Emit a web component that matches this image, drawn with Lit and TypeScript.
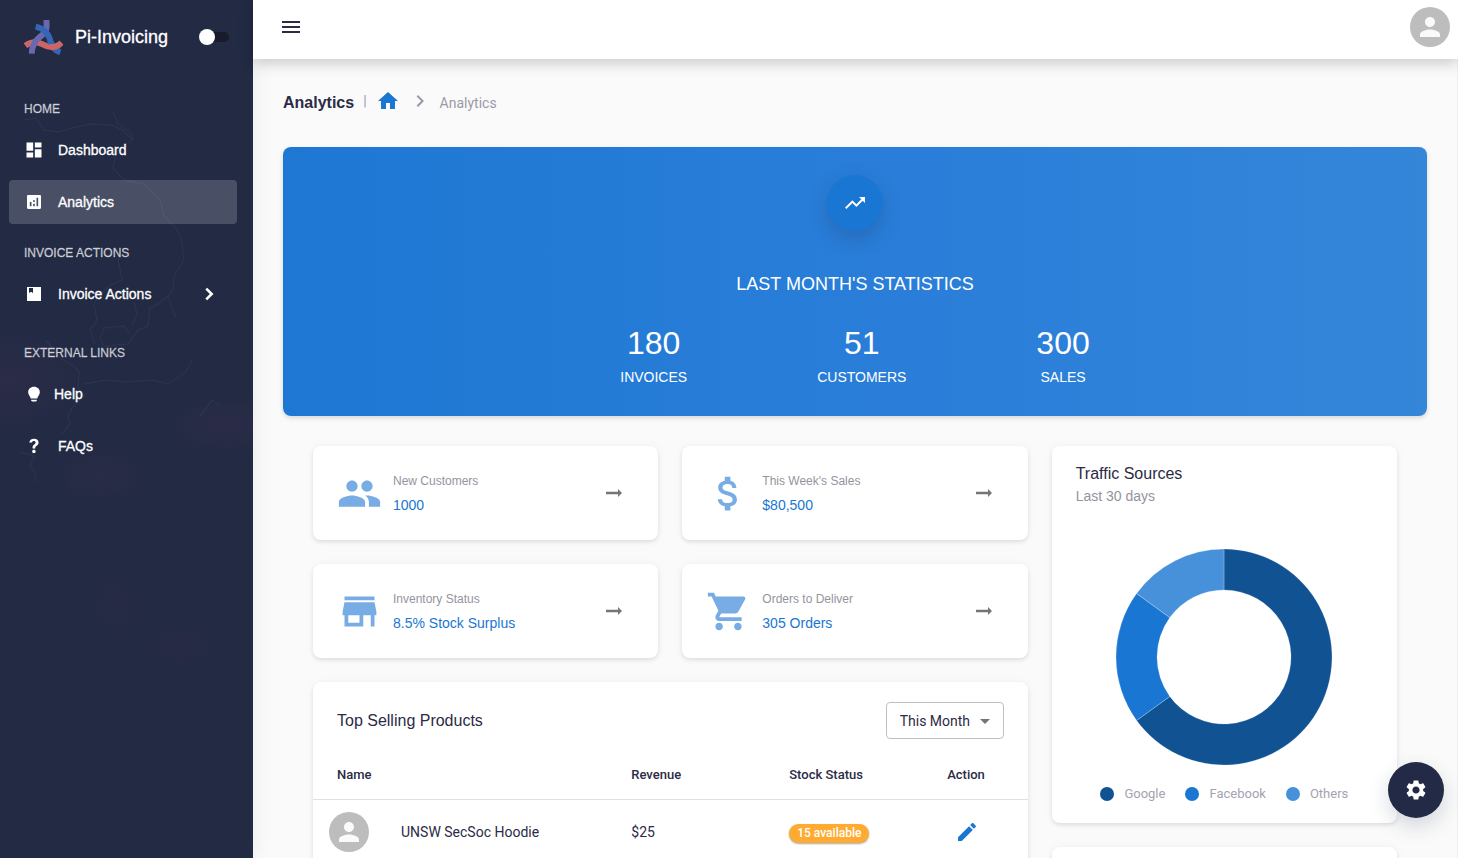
import { LitElement, html, css, svg } from "lit";
import { customElement, property, state } from "lit/decorators.js";
import { classMap } from "lit/directives/class-map.js";

const ICONS: Record<string, string> = {
  people:
    "M16 11c1.66 0 2.99-1.34 2.99-3S17.66 5 16 5c-1.66 0-3 1.34-3 3s1.34 3 3 3zm-8 0c1.66 0 2.99-1.34 2.99-3S9.66 5 8 5C6.34 5 5 6.34 5 8s1.34 3 3 3zm0 2c-2.33 0-7 1.17-7 3.5V19h14v-2.5c0-2.33-4.67-3.5-7-3.5zm8 0c-.29 0-.62.02-.97.05 1.16.84 1.97 1.97 1.97 3.45V19h6v-2.5c0-2.33-4.67-3.5-7-3.5z",
  money:
    "M11.8 10.9c-2.27-.59-3-1.2-3-2.15 0-1.09 1.01-1.85 2.7-1.85 1.78 0 2.44.85 2.5 2.1h2.21c-.07-1.72-1.12-3.3-3.21-3.81V3h-3v2.16c-1.94.42-3.5 1.68-3.5 3.61 0 2.31 1.91 3.46 4.7 4.13 2.5.6 3 1.48 3 2.41 0 .69-.49 1.79-2.7 1.79-2.06 0-2.87-.92-2.98-2.1h-2.2c.12 2.19 1.76 3.42 3.68 3.83V21h3v-2.15c1.95-.37 3.5-1.5 3.5-3.55 0-2.84-2.43-3.81-4.7-4.4z",
  store: "M20 4H4v2h16V4zm1 10v-2l-1-5H4l-1 5v2h1v6h10v-6h4v6h2v-6h1zm-9 4H6v-4h6v4z",
  cart:
    "M7 18c-1.1 0-1.99.9-1.99 2S5.9 22 7 22s2-.9 2-2-.9-2-2-2zM1 2v2h2l3.6 7.59-1.35 2.45c-.16.28-.25.61-.25.96 0 1.1.9 2 2 2h12v-2H7.42c-.14 0-.25-.11-.25-.25l.03-.12.9-1.63h7.45c.75 0 1.41-.41 1.75-1.03l3.58-6.49c.08-.14.12-.31.12-.48 0-.55-.45-1-1-1H5.21l-.94-2H1zm16 16c-1.1 0-1.99.9-1.99 2s.89 2 1.99 2 2-.9 2-2-.9-2-2-2z",
  person:
    "M12 12c2.21 0 4-1.79 4-4s-1.79-4-4-4-4 1.79-4 4 1.79 4 4 4zm0 2c-2.67 0-8 1.34-8 4v2h16v-2c0-2.66-5.33-4-8-4z",
  arrow: "M16.01 10.800H4v2.400h12.01V16L20 12l-3.990-4z",
  home: "M10 20v-6h4v6h5v-8h3L12 3 2 12h3v8z",
  chevron: "M10 6 8.59 7.41 13.17 12l-4.58 4.59L10 18l6-6z",
  chevronBold: "M8.6 4.4 6.4 6.6 11.8 12l-5.4 5.4 2.2 2.2 7.6-7.6z",
  menu: "M3 18h18v-2H3v2zm0-5h18v-2H3v2zm0-7v2h18V6H3z",
  dashboard: "M3 13h8V3H3v10zm0 8h8v-6H3v6zm10 0h8V11h-8v10zm0-18v6h8V3h-8z",
  analytics:
    "M19 3.600H5c-.8 0-1.400.600-1.400 1.400v14c0 .8.600 1.400 1.400 1.400h14c.8 0 1.400-.600 1.400-1.400V5c0-.8-.600-1.400-1.400-1.400zM9 17H7v-5h2v5zm4 0h-2v-3h2v3zm0-5h-2v-2h2v2zm4 5h-2V7h2v10z",
  book: "M3.600 3.600h16.800v16.800H3.600zM6 4.800v6l2.400-1.600 2.400 1.600v-6z",
  bulb:
    "M12 3.400c-4 0-7 2.700-7 6.500 0 3.200 2.500 5 3.200 7.600h7.600c.7-2.600 3.200-4.400 3.200-7.600 0-3.800-3-6.500-7-6.500zM8.600 19h6.800v1l-1.200.9H9.800L8.600 20z",
  question:
    "M12 3.400c-3.300 0-5.300 1.600-5.700 4.500h3.300c.2-1.200 1-1.800 2.200-1.800 1.300 0 2.100.7 2.100 1.800 0 .9-.4 1.400-1.700 2.300-1.500 1-2 2.100-1.900 4.100v.7h3.200v-.5c0-1.300.4-1.800 1.800-2.800 1.500-1 2.200-2.200 2.200-3.900 0-2.700-2.200-4.400-5.500-4.400zM11.900 16.600c-1.200 0-2.100.8-2.100 2s.9 2 2.100 2 2.100-.8 2.100-2-.9-2-2.100-2z",
  trending: "M16 6l2.290 2.290-4.880 4.880-4-4L2 16.590 3.410 18l6-6 4 4 6.300-6.290L22 12V6z",
  edit:
    "M3 17.250V21h3.750L17.810 9.940l-3.750-3.750L3 17.250zM20.710 7.040c.39-.39.39-1.020 0-1.410l-2.340-2.340c-.39-.39-1.020-.39-1.410 0l-1.830 1.830 3.750 3.750 1.830-1.830z",
  caret: "M7 10l5 5 5-5z",
  settings:
    "M19.14 12.94c.04-.3.06-.61.06-.94 0-.32-.02-.64-.07-.94l2.03-1.58c.18-.14.23-.41.12-.61l-1.92-3.32c-.12-.22-.37-.29-.59-.22l-2.39.96c-.5-.38-1.03-.7-1.62-.94l-.36-2.54c-.04-.24-.24-.41-.48-.41h-3.84c-.24 0-.43.17-.47.41l-.36 2.54c-.59.24-1.13.57-1.62.94l-2.39-.96c-.22-.08-.47 0-.59.22L2.74 8.87c-.12.21-.08.47.12.61l2.03 1.58c-.05.3-.09.63-.09.94s.02.64.07.94l-2.03 1.58c-.18.14-.23.41-.12.61l1.92 3.32c.12.22.37.29.59.22l2.39-.96c.5.38 1.03.7 1.62.94l.36 2.54c.05.24.24.41.48.41h3.84c.24 0 .44-.17.47-.41l.36-2.54c.59-.24 1.13-.56 1.62-.94l2.39.96c.22.08.47 0 .59-.22l1.92-3.32c.12-.22.07-.47-.12-.61l-2.01-1.58zM12 15.6c-1.98 0-3.6-1.62-3.6-3.6s1.62-3.6 3.6-3.6 3.6 1.62 3.6 3.6-1.62 3.6-3.6 3.6z",
};

@customElement("ui-icon")
export class UiIcon extends LitElement {
  @property() name = "";

  static styles = css`
    :host {
      display: block;
      flex: none;
      width: 24px;
      height: 24px;
    }
    .glyph {
      display: block;
      width: 100%;
      height: 100%;
      fill: currentColor;
      fill-rule: evenodd;
    }
  `;

  render() {
    return html`<svg class="glyph" viewBox="0 0 24 24" aria-hidden="true">
      <path d=${ICONS[this.name] ?? ""}></path>
    </svg>`;
  }
}

@customElement("ui-avatar")
export class UiAvatar extends LitElement {
  static styles = css`
    :host {
      display: flex;
      align-items: center;
      justify-content: center;
      width: 40px;
      height: 40px;
      border-radius: 50%;
      background: #bdbdbd;
      color: #fafafa;
    }
    .face {
      width: 30px;
      height: 30px;
    }
  `;

  render() {
    return html`<ui-icon class="face" name="person"></ui-icon>`;
  }
}

interface Slice {
  label: string;
  share: number;
  color: string;
}

@customElement("donut-chart")
export class DonutChart extends LitElement {
  @property({ attribute: false }) slices: Slice[] = [];

  static styles = css`
    :host {
      display: block;
    }
    .chart {
      display: block;
      width: 216px;
      height: 216px;
      margin: 0 auto;
    }
    .slice {
      stroke: rgba(255, 255, 255, 0.45);
      stroke-width: 0.5;
    }
    .legend {
      display: flex;
      justify-content: center;
      gap: 20px;
      margin: 20px 0 0;
      padding: 0;
      list-style: none;
    }
    .entry {
      display: flex;
      align-items: center;
      gap: 10px;
      font: 400 13px/18px Roboto, sans-serif;
      color: #a3a3b1;
    }
    .dot {
      width: 14px;
      height: 14px;
      border-radius: 50%;
    }
  `;

  private arc(from: number, to: number) {
    const at = (f: number, r: number) => {
      const a = f * 2 * Math.PI;
      return `${108 + r * Math.sin(a)} ${108 - r * Math.cos(a)}`;
    };
    const big = to - from > 0.5 ? 1 : 0;
    return `M${at(from, 108)}A108 108 0 ${big} 1 ${at(to, 108)}L${at(to, 67)}A67 67 0 ${big} 0 ${at(from, 67)}Z`;
  }

  render() {
    let start = 0;
    return html`
      <svg class="chart" viewBox="0 0 216 216" role="img" aria-label="Traffic sources">
        ${this.slices.map((s) => {
          const d = this.arc(start, start + s.share);
          start += s.share;
          return svg`<path class="slice" d=${d} fill=${s.color}></path>`;
        })}
      </svg>
      <ul class="legend">
        ${this.slices.map(
          (s) => html`<li class="entry">
            <span class="dot" style="background:${s.color}"></span>${s.label}
          </li>`
        )}
      </ul>
    `;
  }
}

@customElement("side-bar")
export class SideBar extends LitElement {
  @state() private dark = false;

  static styles = css`
    :host {
      display: block;
      position: relative;
      z-index: 1;
      overflow: hidden;
      box-sizing: border-box;
      color: #fff;
      font-family: "Liberation Sans", Arial, sans-serif;
      background:
        radial-gradient(90px 60px at 10px 380px, rgba(58, 46, 78, 0.35), transparent),
        radial-gradient(70px 34px at 225px 425px, rgba(58, 46, 78, 0.35), transparent),
        radial-gradient(60px 34px at 100px 475px, rgba(58, 46, 78, 0.3), transparent),
        radial-gradient(34px 40px at 115px 605px, rgba(52, 42, 72, 0.3), transparent),
        radial-gradient(44px 26px at 182px 646px, rgba(52, 42, 72, 0.35), transparent),
        #222a44;
    }
    .map {
      position: absolute;
      top: 0;
      left: 0;
      width: 253px;
      height: 500px;
      fill: none;
      stroke: #41597a;
      stroke-opacity: 0.2;
      stroke-width: 1.4;
      stroke-linejoin: round;
      pointer-events: none;
    }
    .panel {
      position: relative;
    }
    .brand {
      display: flex;
      align-items: center;
      height: 74px;
      padding: 0 24px;
      font-size: 18px;
      line-height: 24px;
    }
    .logo {
      width: 39px;
      height: 35px;
      margin-right: 12px;
      fill: none;
      stroke-width: 18;
    }
    .name {
      flex: 1;
      margin: 0;
      font: inherit;
      -webkit-text-stroke: 0.3px #fff;
    }
    .switch {
      appearance: none;
      display: flex;
      align-items: center;
      width: 30px;
      height: 10px;
      margin: 0;
      cursor: pointer;
      background: #171b2b;
      border-radius: 5px;
    }
    .switch::before {
      content: "";
      flex: none;
      width: 16px;
      height: 16px;
      border-radius: 50%;
      background: #fff;
    }
    .switch:checked::before {
      margin-left: auto;
    }
    .nav {
      padding: 14px 16px 0 9px;
    }
    .group {
      margin: 0;
      padding: 0;
      list-style: none;
    }
    .spaced {
      padding-bottom: 8px;
    }
    .caption {
      margin: 0;
      padding: 2px 0 0 15px;
      font-size: 12px;
      font-weight: 400;
      line-height: 38px;
      color: rgba(255, 255, 255, 0.7);
      -webkit-text-stroke: 0.3px rgba(255, 255, 255, 0.6);
    }
    .item {
      display: flex;
      align-items: center;
      gap: 14px;
      height: 44px;
      margin-bottom: 8px;
      padding: 0 17px 0 15px;
      border-radius: 4px;
      color: #fff;
      font-size: 14px;
      line-height: 20px;
      text-decoration: none;
      -webkit-text-stroke: 0.3px #fff;
    }
    .tight {
      gap: 10px;
    }
    .active {
      background: rgba(255, 255, 255, 0.18);
    }
    .icon {
      width: 20px;
      height: 20px;
    }
    .label {
      flex: 1;
    }
  `;

  private item(icon: string, label: string, opts: { active?: boolean; tight?: boolean; more?: boolean } = {}) {
    return html`<li>
      <a
        class=${classMap({ item: true, active: !!opts.active, tight: !!opts.tight })}
        href="#"
        aria-current=${opts.active ? "page" : "false"}
      >
        <ui-icon class="icon" name=${icon}></ui-icon>
        <span class="label">${label}</span>
        ${opts.more ? html`<ui-icon class="icon" name="chevronBold"></ui-icon>` : ""}
      </a>
    </li>`;
  }

  render() {
    return html`
      <svg class="map" viewBox="0 0 253 500" aria-hidden="true">
        <path
          d="M24 120 36 118 44 130 58 132 72 128 90 124 112 125 124 131 132 140 124 146 116 152 113 168 124 180 144 184 160 200 164 216 176 228 181 238 184 260 174 276 173 290 168 296 158 304 150 308 148 326 138 330 128 344 104 346 100 338 104 328 124 326 130 334"
        ></path>
        <path d="M113 112 118 124 130 132 133 140M118 258 122 280 112 284 100 294 94 304 97 320 90 330 95 344M134 302 137 314 132 326 M168 296 176 318"></path>
        <path
          d="M46 340 60 358 74 366 79 372 78 388 84 396 72 408 68 416 70 424 62 434 M84 384 106 380 124 382 152 380 168 384 186 372 192 360 M20 452 34 456 30 466 36 474 34 482 M200 416 212 400 220 406"
        ></path>
      </svg>
      <div class="panel">
        <header class="brand">
          <svg class="logo" viewBox="0 0 117 105" aria-hidden="true">
            <path stroke="#3565b5" d="M81 66C84 80 94 92 109 97"></path>
            <path stroke="#cc6666" d="M4 77C22 64 38 64 56 73C76 84 96 86 113 68"></path>
            <path stroke="#6a69b0" d="M67 0C70 32 66 36 46 52C30 65 24 78 23 101"></path>
            <path stroke="#3565b5" d="M35 20C62 26 77 44 81 72"></path>
          </svg>
          <h1 class="name">Pi-Invoicing</h1>
          <input
            class="switch"
            type="checkbox"
            aria-label="Dark mode"
            .checked=${this.dark}
            @change=${() => (this.dark = !this.dark)}
          />
        </header>
        <nav class="nav" aria-label="Main">
          <h2 class="caption">HOME</h2>
          <ul class="group">
            ${this.item("dashboard", "Dashboard")} ${this.item("analytics", "Analytics", { active: true })}
          </ul>
          <h2 class="caption">INVOICE ACTIONS</h2>
          <ul class="group spaced">
            ${this.item("book", "Invoice Actions", { more: true })}
          </ul>
          <h2 class="caption">EXTERNAL LINKS</h2>
          <ul class="group">
            ${this.item("bulb", "Help", { tight: true })} ${this.item("question", "FAQs")}
          </ul>
        </nav>
      </div>
    `;
  }
}

@customElement("app-root")
export class AppRoot extends LitElement {
  private stats = [
    { value: "180", label: "INVOICES" },
    { value: "51", label: "CUSTOMERS" },
    { value: "300", label: "SALES" },
  ];

  private tiles = [
    { icon: "people", label: "New Customers", value: "1000" },
    { icon: "money", label: "This Week's Sales", value: "$80,500" },
    { icon: "store", label: "Inventory Status", value: "8.5% Stock Surplus" },
    { icon: "cart", label: "Orders to Deliver", value: "305 Orders" },
  ];

  private slices: Slice[] = [
    { label: "Google", share: 0.65, color: "#115293" },
    { label: "Facebook", share: 0.2, color: "#1976d2" },
    { label: "Others", share: 0.15, color: "#4791db" },
  ];

  static styles = css`
    :host {
      display: grid;
      grid-template-columns: 253px minmax(0, 1fr);
      height: 100vh;
      overflow: hidden;
      background: #fafafa;
      color: #2b2b45;
      font-family: Roboto, sans-serif;
    }
    .side {
      box-shadow: 0 0 20px rgba(0, 0, 0, 0.07);
    }
    .page {
      display: flex;
      flex-direction: column;
      min-height: 0;
    }
    .topbar {
      position: relative;
      z-index: 2;
      display: flex;
      justify-content: space-between;
      padding: 7px 8px 12px 26px;
      background: #fff;
      box-shadow: 0 4px 14px rgba(0, 0, 0, 0.2);
    }
    .plain {
      display: flex;
      align-items: center;
      justify-content: center;
      padding: 0;
      border: 0;
      background: none;
      color: inherit;
      cursor: pointer;
    }
    .menu {
      width: 24px;
      height: 40px;
    }
    .content {
      flex: 1;
      min-height: 0;
      overflow: auto;
      scrollbar-width: none;
      padding: 30px;
      border-right: 1px solid #eeeeee;
    }
    .crumbs {
      display: flex;
      align-items: center;
      height: 24px;
      margin-bottom: 34px;
      font-size: 14px;
      line-height: 24px;
      color: #9a9aa6;
    }
    .title {
      margin: 0 9px 0 0;
      padding-top: 3px;
      font: 700 16px/24px "Liberation Sans", Arial, sans-serif;
      color: #2b2b45;
    }
    .crumb {
      padding-top: 3px;
    }
    .home {
      margin: 0 8px 0 9px;
      color: #1976d2;
    }
    .next {
      margin-right: 8px;
    }
    .banner {
      display: flex;
      flex-direction: column;
      align-items: center;
      padding: 28px 24px 27px;
      border-radius: 8px;
      background: linear-gradient(90deg, #1e78d3, #2a7ed9 55%, #3486d9);
      box-shadow: 0 2px 5px rgba(0, 0, 0, 0.14);
      color: #fff;
      font-family: "Liberation Sans", Arial, sans-serif;
    }
    .badge {
      display: flex;
      align-items: center;
      justify-content: center;
      width: 56px;
      height: 56px;
      border-radius: 50%;
      background: #1976d2;
      box-shadow: 0 8px 20px rgba(34, 51, 84, 0.24);
    }
    .heading {
      margin: 40px 0 24px;
      font-size: 18px;
      font-weight: 400;
      line-height: 26px;
    }
    .stats {
      display: flex;
      gap: 130px;
      margin: 0;
    }
    .stat {
      display: flex;
      flex-direction: column-reverse;
      text-align: center;
    }
    .count {
      margin: 0;
      font-size: 32px;
      line-height: 44px;
    }
    .unit {
      font-size: 14px;
      line-height: 24px;
    }
    .board {
      display: grid;
      grid-template-columns: repeat(3, minmax(0, 1fr));
      gap: 24px;
      padding: 30px 30px 0;
    }
    .left {
      grid-column: span 2;
      display: grid;
      grid-template-columns: repeat(2, minmax(0, 1fr));
      align-content: start;
      gap: 24px;
    }
    .right {
      display: flex;
      flex-direction: column;
      gap: 24px;
    }
    .card {
      border-radius: 8px;
      background: #fff;
      box-shadow:
        0 2px 4px rgba(0, 0, 0, 0.1),
        0 0 12px rgba(0, 0, 0, 0.03);
    }
    .tile {
      display: flex;
      align-items: center;
      padding: 23px 32px 23px 24px;
      font-family: "Liberation Sans", Arial, sans-serif;
    }
    .tile-icon {
      width: 45px;
      height: 45px;
      margin-right: 11px;
      color: #78ace4;
    }
    .tile-text {
      flex: 1;
    }
    .tile-label {
      margin: 0;
      font-size: 12px;
      line-height: 24px;
      color: #94949e;
    }
    .tile-value {
      margin: 0;
      font-size: 14px;
      line-height: 24px;
      color: #1976d2;
    }
    .go {
      color: #757575;
    }
    .products {
      grid-column: span 2;
      overflow: hidden;
    }
    .products-head {
      display: flex;
      align-items: center;
      justify-content: space-between;
      padding: 20px 24px 11px;
    }
    .card-title {
      margin: 0;
      font: 400 16px/24px "Liberation Sans", Arial, sans-serif;
    }
    .picker {
      display: grid;
      align-items: center;
    }
    .period {
      grid-area: 1 / 1;
      appearance: none;
      height: 37px;
      padding: 0 32px 0 13px;
      border: 1px solid #c0c0c0;
      border-radius: 4px;
      background: none;
      color: inherit;
      font: 400 14px/20px Roboto, sans-serif;
    }
    .caret {
      grid-area: 1 / 1;
      justify-self: end;
      margin-right: 7px;
      color: #757575;
      pointer-events: none;
    }
    .table {
      width: 100%;
      border-collapse: collapse;
      table-layout: fixed;
      font-size: 14px;
      line-height: 20px;
    }
    .col-name {
      width: 42.3%;
    }
    .col-mid {
      width: 22.1%;
    }
    .th {
      height: 49px;
      padding: 0 16px;
      border-bottom: 1px solid #e0e0e0;
      font-size: 13px;
      font-weight: 500;
      text-align: left;
    }
    .th:first-child {
      padding-left: 24px;
    }
    .td {
      height: 64px;
      padding: 0 16px;
    }
    .product {
      display: flex;
      align-items: center;
      gap: 32px;
    }
    .pill {
      display: inline-block;
      padding: 0 8px;
      border-radius: 10px;
      background: #ffab32;
      box-shadow: 0 1px 2px rgba(0, 0, 0, 0.35);
      color: #fff;
      font-size: 12px;
      font-weight: 500;
      line-height: 19px;
    }
    .edit {
      width: 40px;
      height: 40px;
      color: #1976d2;
    }
    .traffic {
      padding: 16px 24px 20px;
    }
    .sub {
      margin: 0 0 43px;
      font: 400 14px/20px "Liberation Sans", Arial, sans-serif;
      color: #9494a0;
    }
    .next-card {
      height: 200px;
    }
    .fab {
      position: fixed;
      right: 14px;
      bottom: 40px;
      z-index: 3;
      width: 56px;
      height: 56px;
      border-radius: 50%;
      background: #232a45;
      box-shadow: 0 8px 20px rgba(34, 51, 84, 0.18);
      color: #fff;
    }
  `;

  render() {
    return html`
      <side-bar class="side"></side-bar>
      <div class="page">
        <header class="topbar">
          <button class="plain menu" aria-label="Toggle menu"><ui-icon name="menu"></ui-icon></button>
          <button class="plain" aria-label="Account"><ui-avatar></ui-avatar></button>
        </header>
        <main class="content">
          <nav class="crumbs" aria-label="Breadcrumb">
            <h2 class="title">Analytics</h2>
            <span>|</span>
            <a class="home" href="#" aria-label="Home"><ui-icon name="home"></ui-icon></a>
            <ui-icon class="next" name="chevron"></ui-icon>
            <span class="crumb">Analytics</span>
          </nav>

          <section class="banner">
            <div class="badge"><ui-icon name="trending"></ui-icon></div>
            <h3 class="heading">LAST MONTH'S STATISTICS</h3>
            <dl class="stats">
              ${this.stats.map(
                (s) => html`<div class="stat">
                  <dt class="unit">${s.label}</dt>
                  <dd class="count">${s.value}</dd>
                </div>`
              )}
            </dl>
          </section>

          <div class="board">
            <div class="left">
              ${this.tiles.map(
                (t) => html`<section class="card tile">
                  <ui-icon class="tile-icon" name=${t.icon}></ui-icon>
                  <div class="tile-text">
                    <p class="tile-label">${t.label}</p>
                    <p class="tile-value">${t.value}</p>
                  </div>
                  <button class="plain go" aria-label="Open ${t.label}"><ui-icon name="arrow"></ui-icon></button>
                </section>`
              )}
              <section class="card products">
                <div class="products-head">
                  <h3 class="card-title">Top Selling Products</h3>
                  <div class="picker">
                    <select class="period" aria-label="Period">
                      <option>This Month</option>
                    </select>
                    <ui-icon class="caret" name="caret"></ui-icon>
                  </div>
                </div>
                <table class="table">
                  <colgroup>
                    <col class="col-name" />
                    <col class="col-mid" />
                    <col class="col-mid" />
                    <col />
                  </colgroup>
                  <thead>
                    <tr>
                      <th class="th">Name</th>
                      <th class="th">Revenue</th>
                      <th class="th">Stock Status</th>
                      <th class="th">Action</th>
                    </tr>
                  </thead>
                  <tbody>
                    <tr>
                      <td class="td">
                        <div class="product"><ui-avatar></ui-avatar><span>UNSW SecSoc Hoodie</span></div>
                      </td>
                      <td class="td">$25</td>
                      <td class="td"><span class="pill">15 available</span></td>
                      <td class="td">
                        <button class="plain edit" aria-label="Edit UNSW SecSoc Hoodie">
                          <ui-icon name="edit"></ui-icon>
                        </button>
                      </td>
                    </tr>
                  </tbody>
                </table>
              </section>
            </div>
            <div class="right">
              <section class="card traffic">
                <h3 class="card-title">Traffic Sources</h3>
                <p class="sub">Last 30 days</p>
                <donut-chart .slices=${this.slices}></donut-chart>
              </section>
              <section class="card next-card"></section>
            </div>
          </div>
        </main>
      </div>
      <button class="plain fab" aria-label="Settings"><ui-icon name="settings"></ui-icon></button>
    `;
  }
}
